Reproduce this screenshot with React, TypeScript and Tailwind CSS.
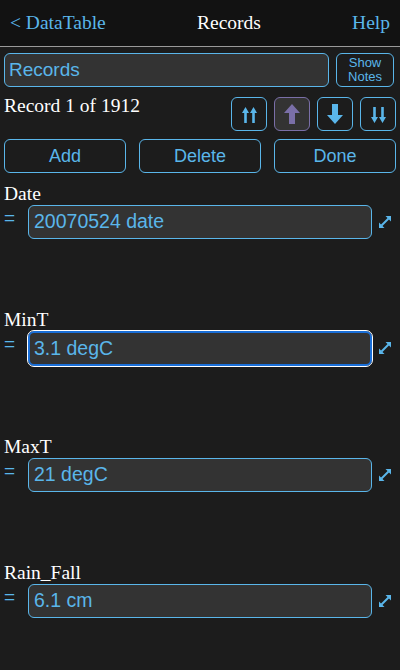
import React from "react";

const serif = { fontFamily: '"Liberation Serif", "Times New Roman", serif' };
const sans = { fontFamily: '"Liberation Sans", Arial, sans-serif' };

function Expand() {
  return (
    <svg width="14" height="14" viewBox="0 0 14 14" className="text-[#5ab6ea]">
      <line x1="3.5" y1="10.5" x2="10.5" y2="3.5" stroke="currentColor" strokeWidth="2" />
      <polygon points="13,1 13,6.5 7.5,1" fill="currentColor" />
      <polygon points="1,13 1,7.5 6.5,13" fill="currentColor" />
    </svg>
  );
}

function UpArrow({ color }: { color: string }) {
  return (
    <svg width="16" height="20" viewBox="0 0 16 20">
      <polygon points="8,0 16,9 11,9 11,20 5,20 5,9 0,9" fill={color} />
    </svg>
  );
}
function DownArrow({ color }: { color: string }) {
  return (
    <svg width="16" height="20" viewBox="0 0 16 20">
      <polygon points="8,20 16,11 11,11 11,0 5,0 5,11 0,11" fill={color} />
    </svg>
  );
}
function DoubleUp() {
  return (
    <svg width="15" height="16" viewBox="0 0 15 16">
      <polygon points="3.5,0 7,6 4.8,6 4.8,16 2.2,16 2.2,6 0,6" fill="#5ab6ea" />
      <polygon points="11.5,0 15,6 12.8,6 12.8,16 10.2,16 10.2,6 8,6" fill="#5ab6ea" />
    </svg>
  );
}
function DoubleDown() {
  return (
    <svg width="15" height="16" viewBox="0 0 15 16">
      <polygon points="3.5,16 7,10 4.8,10 4.8,0 2.2,0 2.2,10 0,10" fill="#5ab6ea" />
      <polygon points="11.5,16 15,10 12.8,10 12.8,0 10.2,0 10.2,10 8,10" fill="#5ab6ea" />
    </svg>
  );
}

function Field({ label, value, focused }: { label: string; value: string; focused?: boolean }) {
  return (
    <div className="h-[126.33px] flex flex-col">
      <div className="text-[19.5px] leading-[20px] text-white pl-1" style={serif}>
        {label}
      </div>
      <div className="flex items-start mt-[1px]">
        <div className="w-[28px] pl-1 text-[#5ab6ea] text-[19px] leading-[20px] mt-[3px]" style={sans}>=</div>
        <div
          className={
            focused
              ? "w-[344px] h-[35px] rounded-[6px] bg-[#333333] border-2 border-[#1a6fd8] outline outline-1 outline-white flex items-center px-[4px] text-[#5ab6ea] text-[19.5px]"
              : "w-[344px] h-[34px] rounded-[6px] bg-[#333333] border border-[#5ab6ea] flex items-center px-[5px] text-[#5ab6ea] text-[19.5px]"
          }
          style={sans}
        >
          {value}
        </div>
        <div className="ml-[6px] mt-[10px]">
          <Expand />
        </div>
      </div>
    </div>
  );
}

export default function App() {
  return (
    <div className="w-[400px] h-[670px] bg-[#1c1c1c] overflow-hidden">
      <div className="h-[46px] bg-[#121212] flex items-center px-[10px] text-[19.5px]" style={serif}>
        <span className="text-[#5ab6ea] w-[187px]">&lt; DataTable</span>
        <span className="text-white">Records</span>
        <span className="text-[#5ab6ea] ml-auto">Help</span>
      </div>
      <div className="h-px bg-[#9a9a9a]" />
      <div className="mt-[6px] px-1 flex gap-[7px]">
        <div
          className="w-[325px] h-[34px] rounded-[6px] bg-[#333333] border border-[#5ab6ea] flex items-center px-[4px] text-[#5ab6ea] text-[19px]"
          style={sans}
        >
          Records
        </div>
        <div
          className="w-[58px] h-[34px] rounded-[6px] border border-[#5ab6ea] flex flex-col items-center justify-center text-[#5ab6ea] text-[13px] leading-[14px]"
          style={sans}
        >
          <span>Show</span>
          <span>Notes</span>
        </div>
      </div>
      <div className="mt-[10px] pl-1 pr-1 flex items-start justify-between">
        <div className="text-white text-[19.5px] leading-[20px] mt-[-1px]" style={serif}>
          Record 1 of 1912
        </div>
        <div className="flex gap-[7px]">
          <div className="w-[36px] h-[34px] rounded-[6px] border border-[#5ab6ea] flex items-center justify-center pt-[2px]">
            <DoubleUp />
          </div>
          <div className="w-[36px] h-[34px] rounded-[6px] border border-[#7a6fa8] bg-[#333333] flex items-center justify-center">
            <UpArrow color="#7a6fa8" />
          </div>
          <div className="w-[36px] h-[34px] rounded-[6px] border border-[#5ab6ea] flex items-center justify-center">
            <DownArrow color="#5ab6ea" />
          </div>
          <div className="w-[36px] h-[34px] rounded-[6px] border border-[#5ab6ea] flex items-center justify-center pt-[2px]">
            <DoubleDown />
          </div>
        </div>
      </div>
      <div className="mt-[8px] px-1 flex justify-between text-[#5ab6ea] text-[18px]" style={sans}>
        <div className="w-[122px] h-[34px] rounded-[6px] border border-[#5ab6ea] flex items-center justify-center">Add</div>
        <div className="w-[122px] h-[34px] rounded-[6px] border border-[#5ab6ea] flex items-center justify-center">Delete</div>
        <div className="w-[122px] h-[34px] rounded-[6px] border border-[#5ab6ea] flex items-center justify-center">Done</div>
      </div>
      <div className="mt-[11px]">
        <Field label="Date" value="20070524 date" />
        <Field label="MinT" value="3.1 degC" focused />
        <Field label="MaxT" value="21 degC" />
        <Field label="Rain_Fall" value="6.1 cm" />
      </div>
    </div>
  );
}
